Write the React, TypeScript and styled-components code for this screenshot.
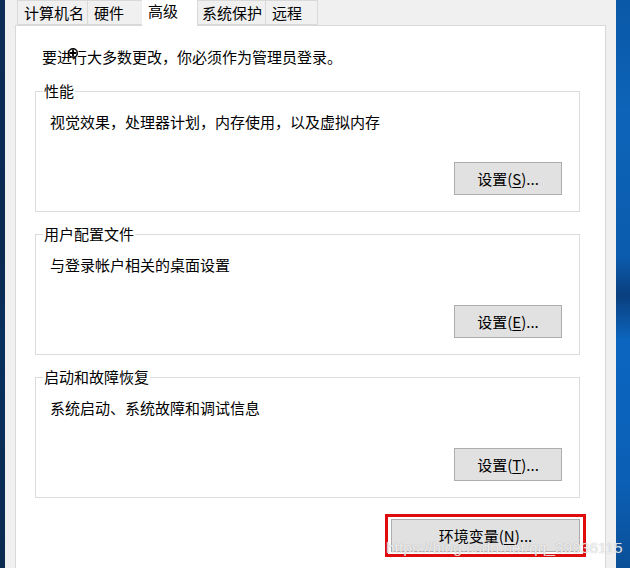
import React from "react";
import styled, { createGlobalStyle } from "styled-components";

const Global = createGlobalStyle`
  html, body { margin: 0; padding: 0; background: #f0f0f0; }
  body { font-family: "Noto Sans", "Noto Sans CJK SC", sans-serif; }
`;

const FONT = `"Noto Sans CJK SC", "Noto Sans", sans-serif`;

const Screen = styled.div`
  position: relative;
  width: 630px;
  height: 568px;
  display: flex;
  overflow: hidden;
  font-family: ${FONT};
  font-size: 15px;
  color: #000;
`;

const DesktopLeft = styled.div`
  width: 5px;
  background: linear-gradient(180deg, #0d2c57 0%, #0a2a52 45%, #08305e 60%, #0b2a50 100%);
`;

const DesktopRight = styled.div`
  width: 14px;
  background: linear-gradient(180deg, #0a58a8 0%, #0d64b8 20%, #0b5cae 45%, #0a3f7e 52%, #0c66c0 60%, #0b5fb4 85%, #0a4f98 100%);
`;

const Window = styled.div`
  flex: 1;
  background: #f0f0f0;
  padding-left: 10px;
  padding-right: 10px;
  display: flex;
  flex-direction: column;
`;

const TabStrip = styled.div`
  height: 25px;
  display: flex;
  align-items: flex-end;
  padding-left: 2px;
  position: relative;
  z-index: 1;
`;

const Tab = styled.div<{ $w: number; $active?: boolean }>`
  box-sizing: border-box;
  width: ${(p) => p.$w}px;
  height: ${(p) => (p.$active ? 27 : 25)}px;
  margin: 0 ${(p) => (p.$active ? -2 : 0)}px ${(p) => (p.$active ? -1 : 0)}px;
  padding-left: 6px;
  background: ${(p) => (p.$active ? "#ffffff" : "#f0f0f0")};
  border: 1px solid #d9d9d9;
  border-bottom: ${(p) => (p.$active ? "none" : "1px solid #d9d9d9")};
  line-height: ${(p) => (p.$active ? 22 : 24)}px;
  white-space: nowrap;
  position: relative;
  z-index: ${(p) => (p.$active ? 2 : 0)};
  & + & { border-left: ${(p) => (p.$active ? "1px solid #d9d9d9" : "none")}; }
`;

const Panel = styled.div`
  flex: 1;
  background: #ffffff;
  border: 1px solid #d9d9d9;
  border-bottom: none;
  padding: 21px 25px 0 19px;
  display: flex;
  flex-direction: column;
`;

const Intro = styled.div`
  line-height: 20px;
  padding-left: 7px;
  margin-bottom: 14px;
  position: relative;
`;

const Group = styled.fieldset`
  margin: 0 0 12px 0;
  padding: 0 17px 16px 14px;
  border: 1px solid #dcdcdc;
  display: flex;
  flex-direction: column;
  min-width: 0;
`;

const Legend = styled.legend`
  margin-left: -7px;
  padding: 0 1px;
  line-height: 20px;
`;

const Desc = styled.div`
  line-height: 20px;
  margin-top: 11px;
`;

const ButtonRow = styled.div`
  display: flex;
  justify-content: flex-end;
  margin-top: 30px;
`;

const Button = styled.button<{ $w: number }>`
  box-sizing: border-box;
  width: ${(p) => p.$w}px;
  height: 33px;
  background: #e1e1e1;
  border: 1px solid #adadad;
  border-radius: 0;
  font-family: ${FONT};
  font-size: 15px;
  color: #000;
  padding: 0;
  cursor: default;
  u { text-decoration-thickness: 1px; text-underline-offset: 2px; }
`;

const BottomRow = styled.div`
  display: flex;
  justify-content: flex-end;
  margin-top: 4px;
  margin-right: -6px;
`;

const Highlight = styled.div`
  border: 3px solid #e00b0b;
  padding: 2px 3px;
`;

const Watermark = styled.div`
  position: absolute;
  left: 386px;
  top: 539px;
  font-family: "Liberation Sans", Arial, sans-serif;
  font-size: 15.5px;
  color: rgba(255, 255, 255, 0.8);
  text-shadow: 0 0 1px rgba(110, 110, 110, 0.6);
  pointer-events: none;
  white-space: nowrap;
`;

const Cursor = styled.svg`
  position: absolute;
  left: 32px;
  top: 0px;
  pointer-events: none;
`;

const tabs = [
  { label: "计算机名", w: 71 },
  { label: "硬件", w: 56 },
  { label: "高级", w: 56, active: true },
  { label: "系统保护", w: 70 },
  { label: "远程", w: 52 },
];

const groups = [
  { title: "性能", desc: "视觉效果，处理器计划，内存使用，以及虚拟内存", key: "S" },
  { title: "用户配置文件", desc: "与登录帐户相关的桌面设置", key: "E" },
  { title: "启动和故障恢复", desc: "系统启动、系统故障和调试信息", key: "T" },
];

export default function App() {
  return (
    <>
      <Global />
      <Screen>
        <DesktopLeft />
        <Window>
          <TabStrip>
            {tabs.map((t) => (
              <Tab key={t.label} $w={t.w} $active={t.active}>
                {t.label}
              </Tab>
            ))}
          </TabStrip>
          <Panel>
            <Intro>
              要进行大多数更改，你必须作为管理员登录。
              <Cursor width="12" height="12" viewBox="0 0 12 12">
                <circle cx="6" cy="6" r="4.3" fill="#fff" stroke="#000" strokeWidth="1.4" />
                <path d="M6 2.6V9.4M2.6 6H9.4" stroke="#000" strokeWidth="1.8" />
              </Cursor>
            </Intro>
            {groups.map((g) => (
              <Group key={g.title}>
                <Legend>{g.title}</Legend>
                <Desc>{g.desc}</Desc>
                <ButtonRow>
                  <Button $w={108}>
                    设置(<u>{g.key}</u>)...
                  </Button>
                </ButtonRow>
              </Group>
            ))}
            <BottomRow>
              <Highlight>
                <Button $w={189}>
                  环境变量(<u>N</u>)...
                </Button>
              </Highlight>
            </BottomRow>
          </Panel>
        </Window>
        <DesktopRight />
        <Watermark>https://blog.csdn.net/qq_39936115</Watermark>
      </Screen>
    </>
  );
}
